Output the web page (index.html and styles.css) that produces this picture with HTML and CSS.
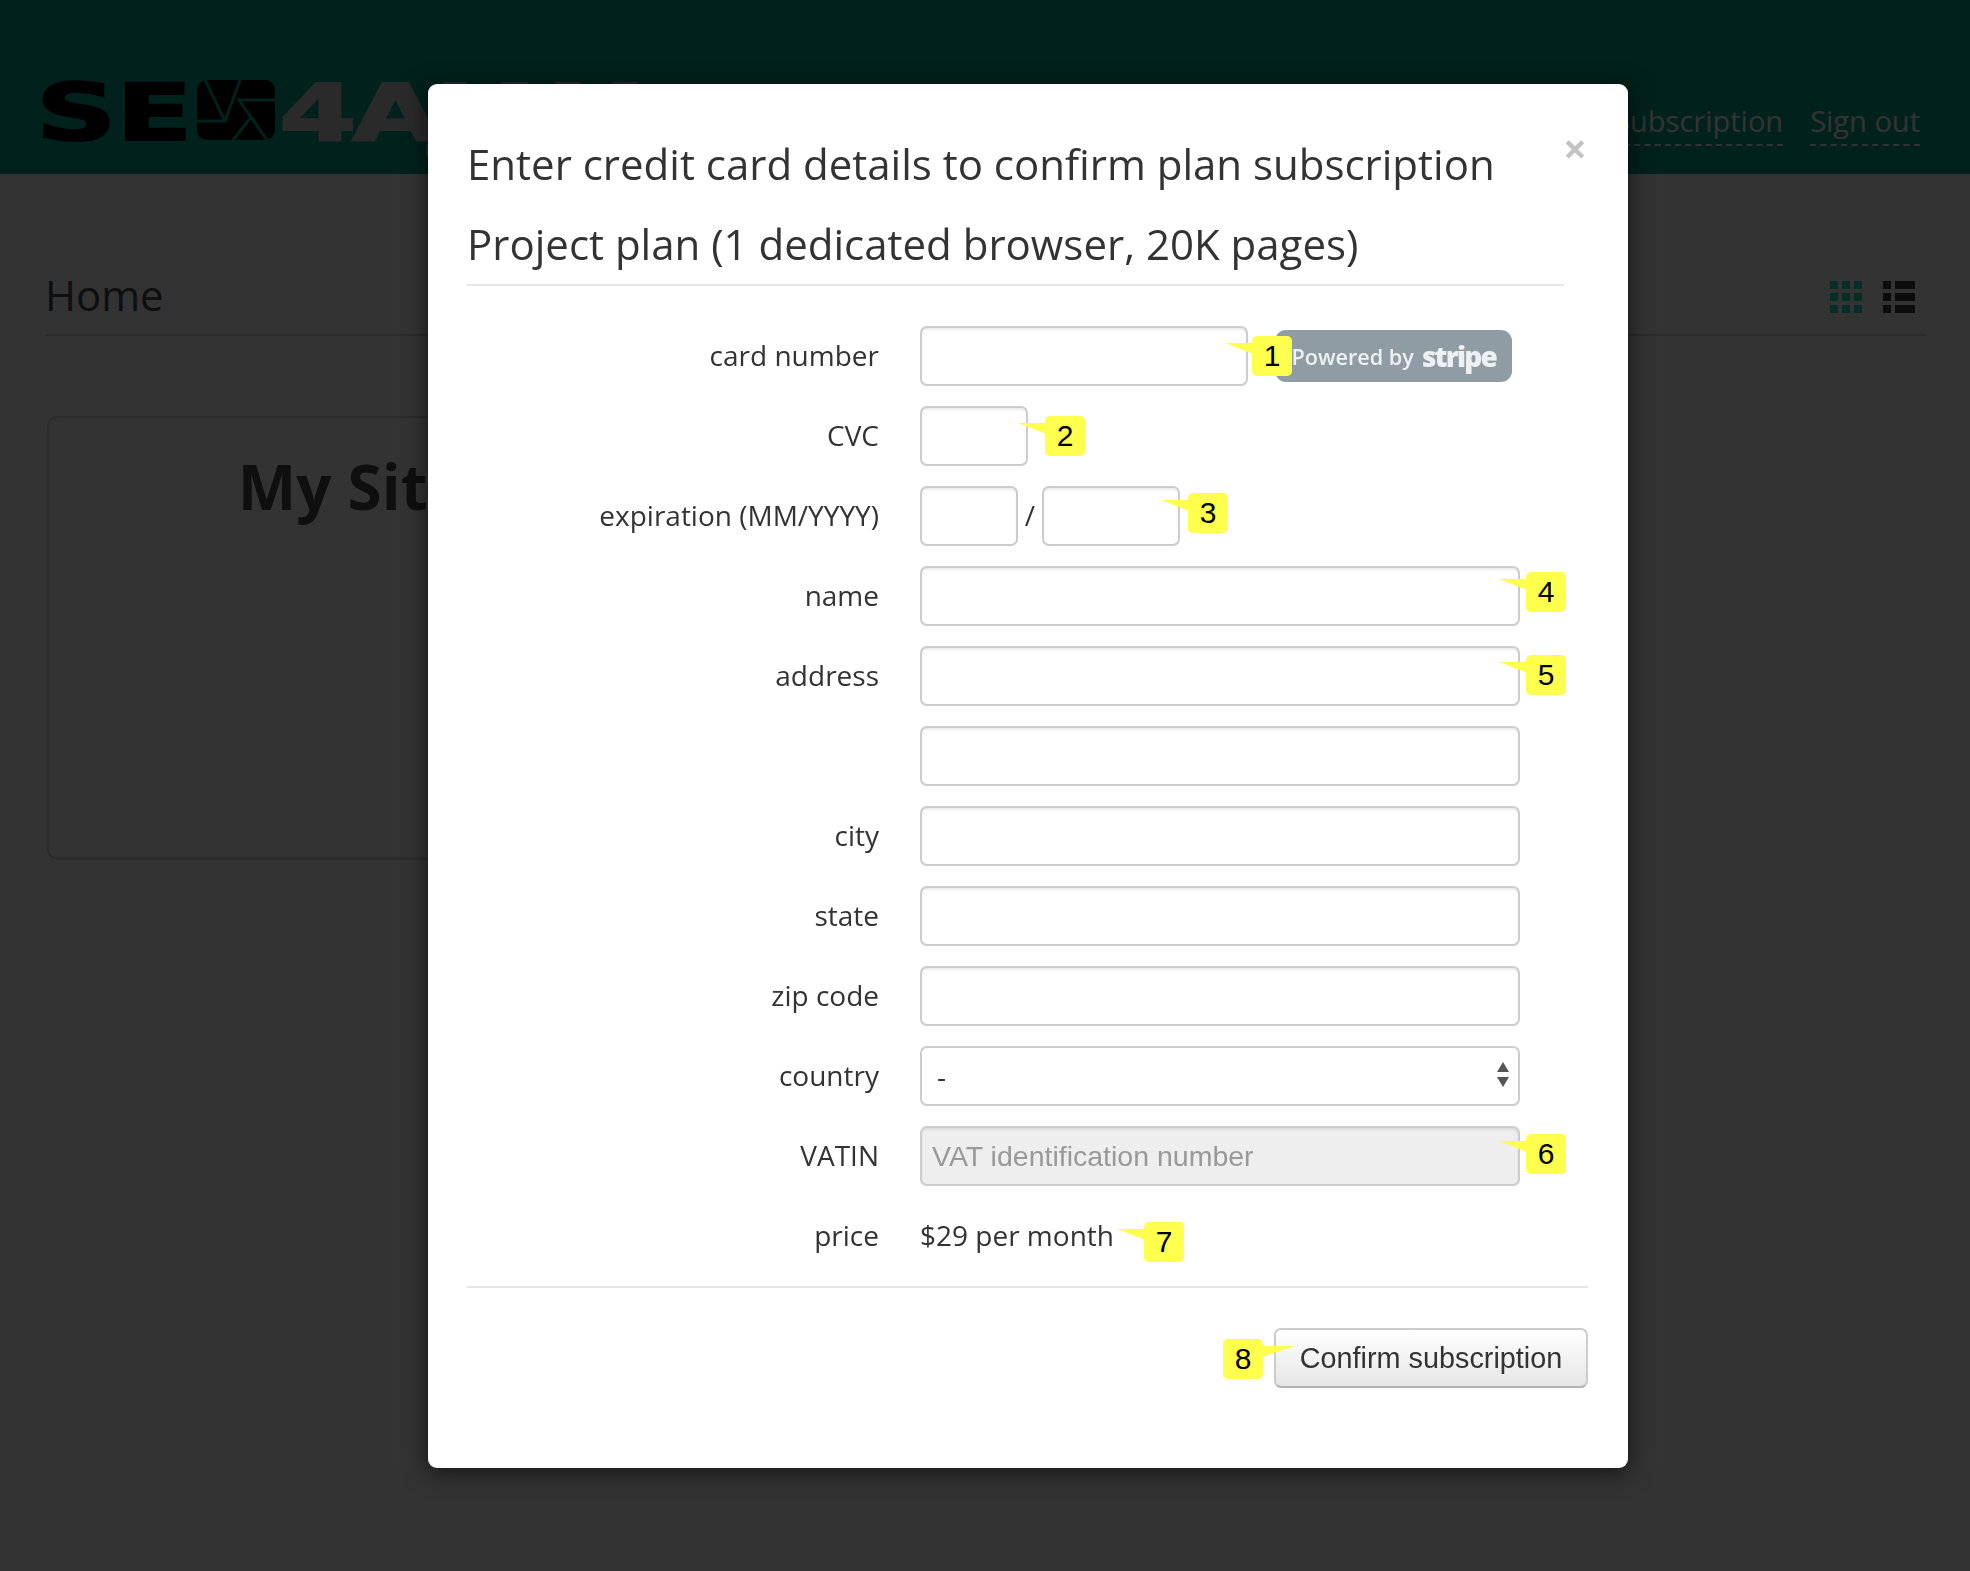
FILE: index.html
```html
<!DOCTYPE html>
<html lang="en">
<head>
  <meta charset="UTF-8">
  <title>SEO4Ajax - Subscription</title>
  <link rel="stylesheet" href="styles.css">
</head>
<body>

<header class="topbar">
  <div class="logo">
    <span class="logo-se">SE</span>
    <svg class="logo-mark" viewBox="0 0 78 60" role="img" aria-label="O">
      <rect width="78" height="60" rx="10" fill="#000"/>
      <path d="M8 0 L28 41 L0 41 M43 0 L28 41 M78 20 L42 20 L70 60 M55 36 L36 60" fill="none" stroke="#05a58c" stroke-width="3"/>
    </svg>
    <span class="logo-rest">4AJAX</span>
  </div>
  <nav class="topnav">
    <a href="#">Subscription</a>
    <a href="#">Sign out</a>
  </nav>
</header>

<main class="content">
  <div class="page-head">
    <h1>Home</h1>
    <div class="views">
      <div class="view-grid">
        <i></i><i></i><i></i>
        <i></i><i></i><i></i>
        <i></i><i></i><i></i>
      </div>
      <div class="view-list">
        <i></i><b></b>
        <i></i><b></b>
        <i></i><b></b>
      </div>
    </div>
  </div>

  <section class="site-card">
    <h2>My Site</h2>
  </section>
</main>

<div class="backdrop"></div>

<div class="modal">
  <span class="close">&times;</span>

  <div class="modal-head">
    <h3>Enter credit card details to confirm plan subscription</h3>
    <h3>Project plan (1 dedicated browser, 20K pages)</h3>
  </div>

  <form class="card-form">
    <div class="form-row">
      <label for="cardNumber">card number</label>
      <input type="text" id="cardNumber" class="w-card">
      <div class="stripe-badge"><span>Powered by</span> <strong>stripe</strong></div>
    </div>
    <div class="form-row">
      <label for="cvc">CVC</label>
      <input type="text" id="cvc" class="w-cvc">
    </div>
    <div class="form-row">
      <label for="expMonth">expiration (MM/YYYY)</label>
      <input type="text" id="expMonth" class="w-month">
      <span class="slash">/</span>
      <input type="text" id="expYear" class="w-year">
    </div>
    <div class="form-row">
      <label for="name">name</label>
      <input type="text" id="name">
    </div>
    <div class="form-row">
      <label for="address">address</label>
      <input type="text" id="address">
    </div>
    <div class="form-row">
      <label for="address2"></label>
      <input type="text" id="address2">
    </div>
    <div class="form-row">
      <label for="city">city</label>
      <input type="text" id="city">
    </div>
    <div class="form-row">
      <label for="state">state</label>
      <input type="text" id="state">
    </div>
    <div class="form-row">
      <label for="zip">zip code</label>
      <input type="text" id="zip">
    </div>
    <div class="form-row">
      <label for="country">country</label>
      <div class="select-wrap">
        <select id="country">
          <option>-</option>
        </select>
      </div>
    </div>
    <div class="form-row">
      <label for="vatin">VATIN</label>
      <input type="text" id="vatin" class="vat" placeholder="VAT identification number" disabled>
    </div>
    <div class="form-row">
      <label>price</label>
      <span class="price">$29 per month</span>
    </div>
  </form>

  <div class="modal-foot">
    <button class="confirm-btn" type="button">Confirm subscription</button>
  </div>

  <!-- numbered callouts on top of the form -->
  <span class="callout c1">1</span>
  <span class="callout c2">2</span>
  <span class="callout c3">3</span>
  <span class="callout c4">4</span>
  <span class="callout c5">5</span>
  <span class="callout c6">6</span>
  <span class="callout c7">7</span>
  <span class="callout c8">8</span>
</div>

</body>
</html>
```

FILE: styles.css
```css
* {
  box-sizing: border-box;
}

body {
  margin: 0;
  height: 1571px;
  overflow: hidden;
  font-family: "Open Sans", sans-serif;
  color: #333;
  background-color: white;
}

/* Page behind the backdrop */
.topbar {
  height: 174px;
  padding: 80px 50px 0 36px;
  display: flex;
  justify-content: space-between;
  align-items: flex-start;
  background-color: #05a58c;
}

.logo {
  display: flex;
  align-items: center;
  height: 60px;
  font-family: "DejaVu Sans", sans-serif;
  font-weight: bold;
  font-size: 78px;
  line-height: 60px;
}

.logo-se {
  width: 161px;
  margin-top: 6px;
  color: #000;
  -webkit-text-stroke: 2px #000;
  transform: scaleX(1.43);
  transform-origin: left;
}

.logo-mark {
  width: 78px;
  height: 60px;
  margin-right: 4px;
}

.logo-rest {
  margin-top: 6px;
  color: #d2d2d2;
  -webkit-text-stroke: 2px #d2d2d2;
  letter-spacing: -3px;
  transform: scaleX(1.43);
  transform-origin: left;
}

.topnav {
  display: flex;
  gap: 27px;
  margin-top: 18px;
  font-size: 29px;
  line-height: 46px;
}

.topnav a {
  color: white;
  text-decoration: none;
  border-bottom: 2px dashed white;
}

.content {
  padding: 0 44px 0 45px;
}

.page-head {
  display: flex;
  justify-content: space-between;
  align-items: center;
  height: 162px;
  padding-top: 80px;
  padding-right: 11px;
  border-bottom: 2px solid #ddd;
}

.page-head h1 {
  margin: 0;
  font-size: 42px;
  font-weight: normal;
  color: #4b4b4b;
}

.views {
  display: flex;
  gap: 21px;
  margin-top: 6px;
}

.view-grid {
  display: grid;
  grid-template-columns: repeat(3, 8px);
  gap: 4px;
}

.view-grid i {
  height: 8px;
  background-color: #0ae6be;
}

.view-list {
  display: grid;
  grid-template-columns: 8px 20px;
  gap: 4px;
}

.view-list i,
.view-list b {
  height: 8px;
  background-color: #3c3c3c;
}

.site-card {
  width: 608px;
  height: 444px;
  margin-top: 80px;
  margin-left: 2px;
  border: 2px solid #ddd;
  border-bottom-width: 3px;
  border-radius: 10px;
  text-align: center;
}

.site-card h2 {
  margin: 26px 0 0;
  font-size: 62px;
  font-weight: bold;
  color: #4b4b4b;
}

.backdrop {
  position: fixed;
  top: 0;
  left: 0;
  right: 0;
  bottom: 0;
  background-color: rgba(0, 0, 0, 0.8);
}

/* Modal */
.modal {
  position: absolute;
  top: 84px;
  left: 428px;
  width: 1200px;
  height: 1384px;
  padding: 40px 40px 0 39px;
  background-color: white;
  border-radius: 9px;
  box-shadow: 0 4px 24px rgba(0, 0, 0, 0.6);
}

.close {
  position: absolute;
  top: 39px;
  right: 41px;
  font-size: 42px;
  line-height: 50px;
  font-weight: bold;
  color: #c4c4c4;
}

.modal-head {
  margin-right: 24px;
  border-bottom: 2px solid #e5e5e5;
}

.modal-head h3 {
  margin: 0;
  font-size: 42px;
  line-height: 80px;
  font-weight: normal;
  white-space: nowrap;
}

.card-form {
  display: flex;
  flex-direction: column;
  gap: 20px;
  margin-top: 40px;
}

.form-row {
  display: flex;
  align-items: center;
  height: 60px;
}

.form-row label {
  width: 412px;
  margin-right: 41px;
  padding-bottom: 2px;
  flex-shrink: 0;
  text-align: right;
  font-size: 28px;
}

.form-row input,
.form-row select {
  width: 600px;
  height: 60px;
  border: 2px solid #ccc;
  border-radius: 7px;
  background-color: white;
  box-shadow: inset 0 2px 2px rgba(0, 0, 0, 0.08);
}

.form-row .w-card {
  width: 328px;
}

.form-row .w-cvc {
  width: 108px;
}

.form-row .w-month {
  width: 98px;
}

.form-row .w-year {
  width: 138px;
}

.slash {
  width: 24px;
  padding-bottom: 2px;
  text-align: center;
  font-size: 28px;
}

.stripe-badge {
  display: flex;
  align-items: center;
  justify-content: flex-end;
  gap: 8px;
  width: 237px;
  height: 52px;
  margin-left: 27px;
  padding-right: 16px;
  border-radius: 11px;
  background-color: #8f9ca3;
  color: #eef1f2;
  font-size: 21.6px;
  font-weight: 600;
  white-space: nowrap;
}

.stripe-badge strong {
  font-size: 28px;
  letter-spacing: -1.8px;
  line-height: 52px;
}

.select-wrap {
  position: relative;
  width: 600px;
}

.select-wrap select {
  appearance: none;
  padding-left: 15px;
  font-family: "Open Sans", sans-serif;
  font-size: 28px;
  color: #333;
  box-shadow: none;
}

/* select arrows */
.select-wrap::before,
.select-wrap::after {
  content: "";
  position: absolute;
  right: 11px;
  border-left: 6px solid transparent;
  border-right: 6px solid transparent;
}

.select-wrap::before {
  top: 16px;
  border-bottom: 10px solid #555;
}

.select-wrap::after {
  top: 31px;
  border-top: 10px solid #555;
}

.form-row .vat {
  padding-left: 10px;
  background-color: #eee;
  font-family: "Liberation Sans", sans-serif;
  font-size: 28.5px;
}

.vat::placeholder {
  color: #999;
  opacity: 1;
}

.price {
  padding-bottom: 2px;
  font-size: 28px;
}

.modal-foot {
  display: flex;
  justify-content: flex-end;
  margin-top: 20px;
  padding-top: 40px;
  border-top: 2px solid #e5e5e5;
}

.confirm-btn {
  width: 314px;
  height: 60px;
  border: 2px solid #ccc;
  border-bottom-color: #b3b3b3;
  border-radius: 7px;
  background: linear-gradient(#ffffff, #e6e6e6);
  font-family: "Liberation Sans", sans-serif;
  font-size: 28.8px;
  color: #333;
}

/* Numbered yellow callouts */
.callout {
  position: absolute;
  width: 40px;
  height: 40px;
  border-radius: 5px;
  background-color: #ffff4d;
  font-family: "Liberation Sans", sans-serif;
  font-size: 30px;
  line-height: 40px;
  text-align: center;
  color: black;
}

.callout::before {
  content: "";
  position: absolute;
  top: 7px;
  left: -27px;
  width: 28px;
  height: 11px;
  background-color: #ffff4d;
  clip-path: polygon(0 0, 100% 0, 100% 100%);
}

.c1 { left: 824px; top: 252px; }
.c2 { left: 617px; top: 332px; }
.c3 { left: 760px; top: 409px; }
.c4 { left: 1098px; top: 488px; }
.c5 { left: 1098px; top: 571px; }
.c6 { left: 1098px; top: 1050px; }
.c7 { left: 716px; top: 1138px; }
.c8 { left: 795px; top: 1255px; }

.c8::before {
  left: 39px;
  width: 32px;
  clip-path: polygon(0 100%, 0 0, 100% 0);
}
```
